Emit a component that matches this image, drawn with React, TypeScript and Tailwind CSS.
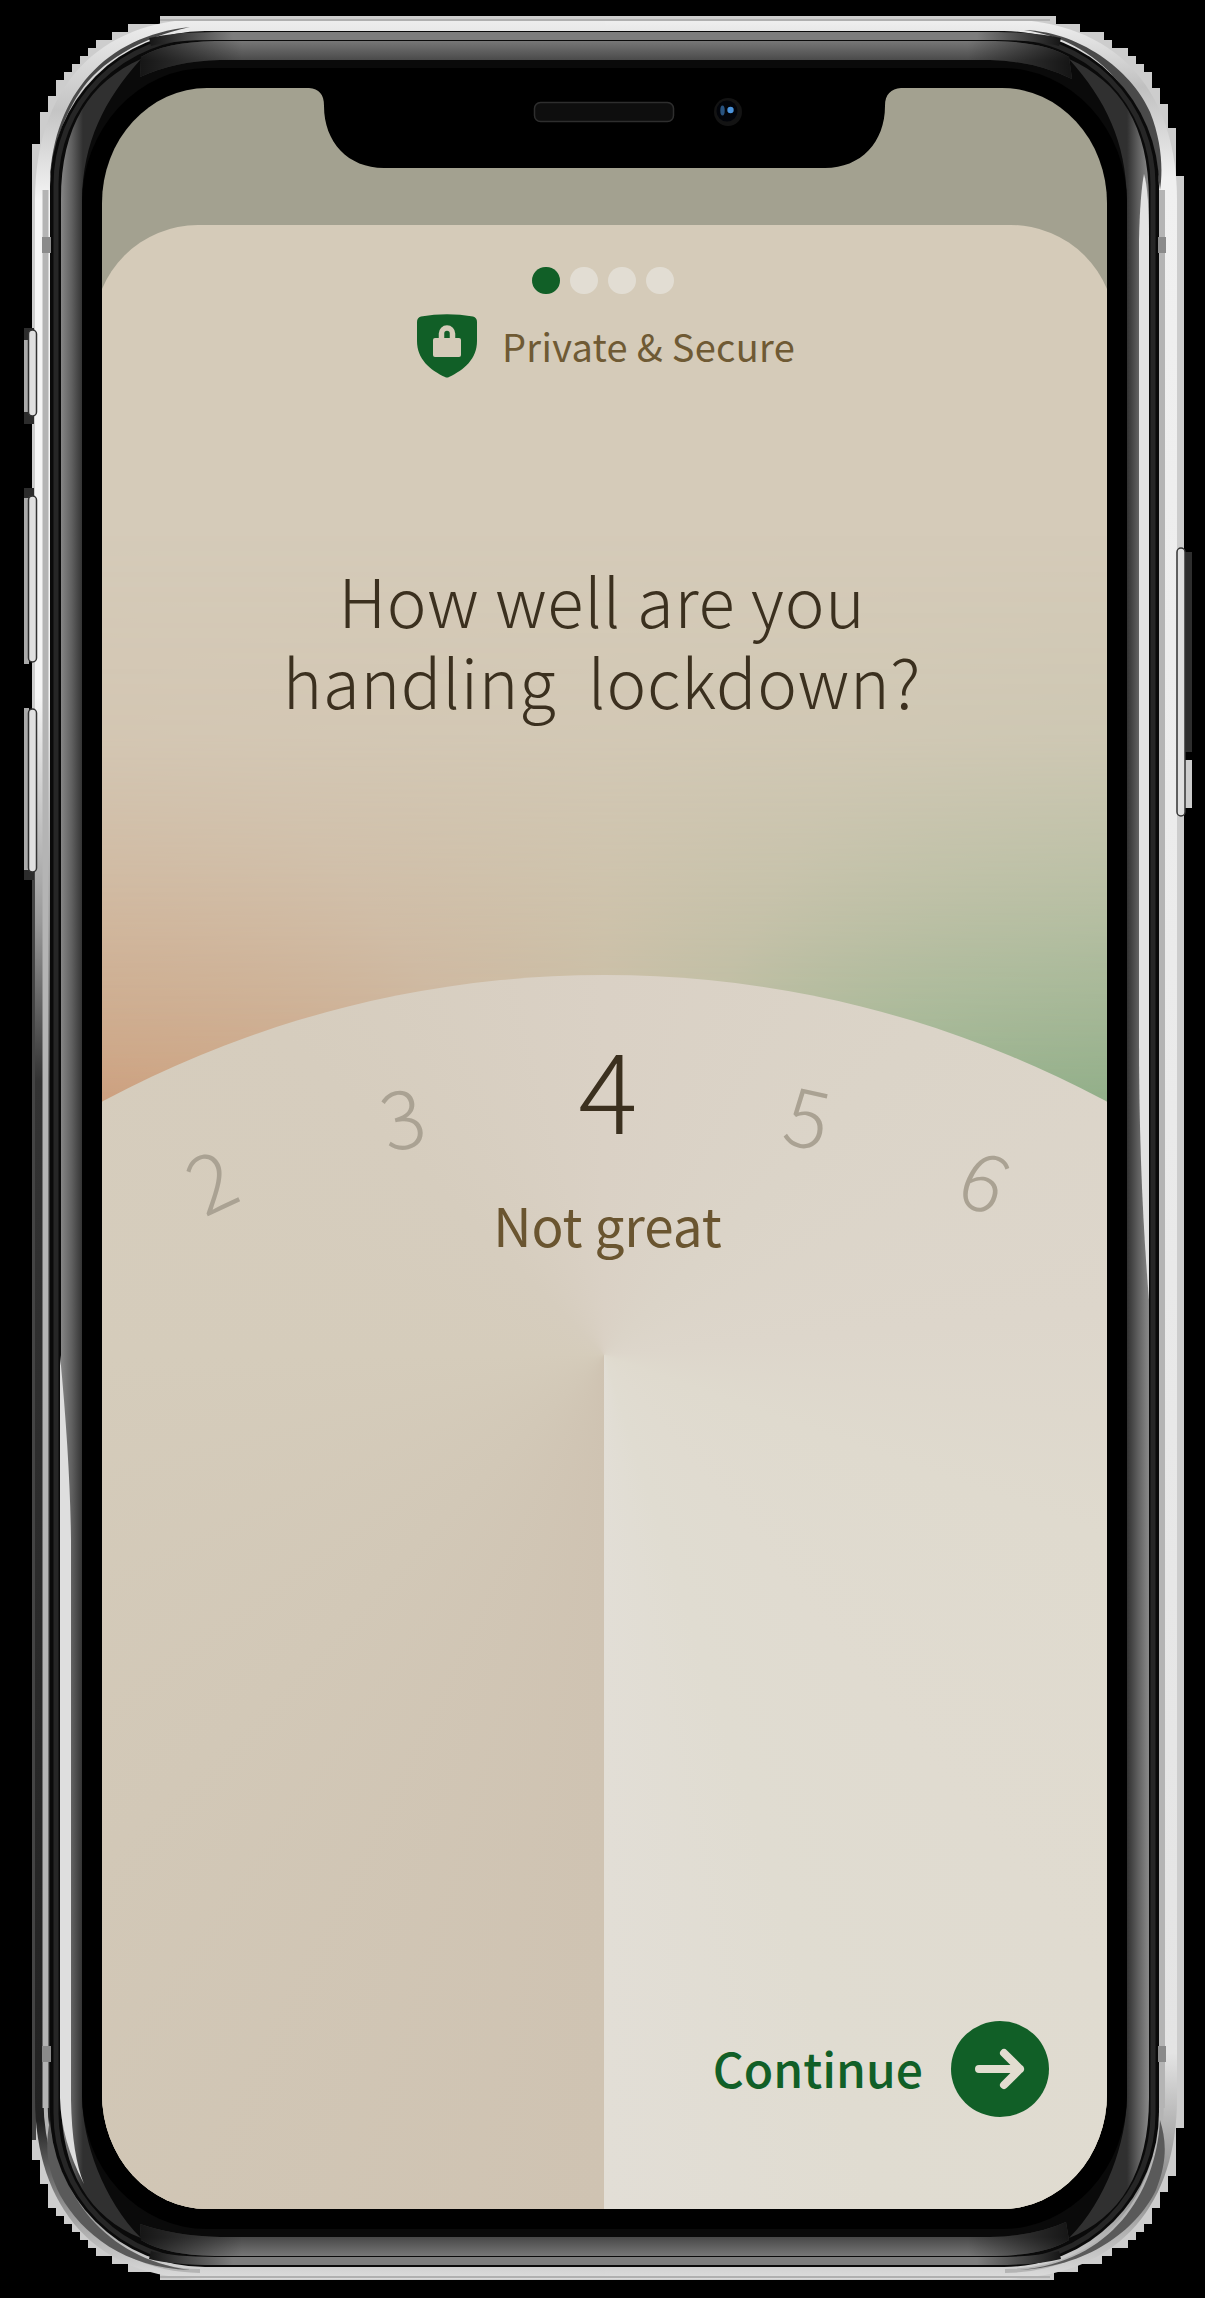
const font = "font-['Noto_Sans_CJK_SC','Noto_Sans',sans-serif]";

const DeviceFrame = () => (
  <svg className="absolute inset-0 h-full w-full" viewBox="0 0 1205 2298" fill="none" aria-hidden="true">
    <defs>
      <linearGradient id="metalL" x1="0" y1="0" x2="0" y2="1">
        <stop offset="0" stopColor="#eeeeee" />
        <stop offset="0.04" stopColor="#c4c4c4" />
        <stop offset="0.08" stopColor="#f4f4f4" />
        <stop offset="0.3" stopColor="#f4f4f4" />
        <stop offset="0.4" stopColor="#999" />
        <stop offset="0.47" stopColor="#333" />
        <stop offset="0.93" stopColor="#222" />
        <stop offset="0.97" stopColor="#999" />
        <stop offset="1" stopColor="#ddd" />
      </linearGradient>
      <linearGradient id="metalR" x1="0" y1="0" x2="0" y2="1">
        <stop offset="0" stopColor="#f0f0f0" />
        <stop offset="0.03" stopColor="#c0c0c0" />
        <stop offset="0.07" stopColor="#f0f0f0" />
        <stop offset="0.9" stopColor="#e4e4e4" />
        <stop offset="0.96" stopColor="#888" />
        <stop offset="1" stopColor="#ddd" />
      </linearGradient>
      <linearGradient id="sideL" x1="61" y1="0" x2="83" y2="0" gradientUnits="userSpaceOnUse">
        <stop offset="0" stopColor="#858585" />
        <stop offset="0.5" stopColor="#5f5f5f" />
        <stop offset="1" stopColor="#303030" />
      </linearGradient>
      <linearGradient id="sideR" x1="1127" y1="0" x2="1149" y2="0" gradientUnits="userSpaceOnUse">
        <stop offset="0" stopColor="#303030" />
        <stop offset="0.5" stopColor="#5f5f5f" />
        <stop offset="1" stopColor="#8a8a8a" />
      </linearGradient>
      <linearGradient id="topBand" x1="0" y1="41" x2="0" y2="61" gradientUnits="userSpaceOnUse">
        <stop offset="0" stopColor="#777" />
        <stop offset="1" stopColor="#484848" />
      </linearGradient>
      <linearGradient id="bottomBand" x1="0" y1="2237" x2="0" y2="2256" gradientUnits="userSpaceOnUse">
        <stop offset="0" stopColor="#484848" />
        <stop offset="1" stopColor="#777" />
      </linearGradient>
      <linearGradient id="bandEnds" x1="140" y1="0" x2="1070" y2="0" gradientUnits="userSpaceOnUse">
        <stop offset="0" stopColor="#0a0a0a" />
        <stop offset="0.1" stopColor="#7d7d7d" />
        <stop offset="0.9" stopColor="#7d7d7d" />
        <stop offset="1" stopColor="#0a0a0a" />
      </linearGradient>
      <linearGradient id="bandShade" x1="140" y1="0" x2="1070" y2="0" gradientUnits="userSpaceOnUse">
        <stop offset="0" stopColor="#000" stopOpacity="0.7" />
        <stop offset="0.11" stopColor="#000" stopOpacity="0" />
        <stop offset="0.89" stopColor="#000" stopOpacity="0" />
        <stop offset="1" stopColor="#000" stopOpacity="0.7" />
      </linearGradient>
    </defs>
    <path
      fill="#cdcdcd"
      shapeRendering="crispEdges"
      d="M160 16H1056V24H1080V32H1104V40H1112V48H1128V56H1136V64H1144V72H1152V88H1160V104H1168V128H1176V176H1184V2128H1176V2176H1168V2192H1160V2208H1152V2224H1144V2232H1136V2240H1128V2248H1112V2256H1102V2264H1078V2272H1054V2280H160V2272H128V2264H112V2256H96V2248H88V2240H80V2232H72V2224H64V2216H56V2208H48V2184H40V2160H32V144H40V112H48V96H56V80H64V72H72V64H80V56H88V48H96V40H112V32H128V24H160Z"
    />
    <path fill="#444" d="M32 872h4v1268h-4z" />
    <path fill="#2c2c2c" d="M24 328h10v12h-10zM24 412h10v12h-10zM24 488h10v10h-10zM24 870h10v10h-10z" />
    <path fill="#aaa" d="M24 340h5v72h-5zM24 498h5v166h-5zM24 708h5v162h-5z" />
    <path fill="#2e2e2e" d="M1184 552h8v200h-8z" />
    <path fill="#cdcdcd" d="M1184 760h8v48h-8z" />
    <path fill="url(#metalL)" d="M605 19H206C96 19 35 90 35 200V2098C35 2208 96 2279 206 2279H605Z" />
    <path fill="url(#metalR)" d="M605 19H1000C1116 19 1177 90 1177 200V2098C1177 2208 1116 2279 1000 2279H605Z" />
    <g fill="#e0e0e0" stroke="#333" strokeWidth="1.5">
      <rect x="28.500" y="330" width="8" height="86" rx="4" />
      <rect x="28.500" y="496" width="8" height="166" rx="4" />
      <rect x="28.500" y="709" width="8" height="163" rx="4" />
      <rect x="1177" y="548" width="8" height="268" rx="4" />
    </g>
    <path stroke="#b4b4b4" strokeWidth="6" d="M45.500 190V2108M1162 190V2108" />
    <path stroke="#b4b4b4" strokeWidth="4" d="M45.500 2100C45.500 2190 100 2270 200 2271M1162 2100C1162 2190 1110 2270 1005 2271" />
    <path stroke="#b0b0b0" strokeWidth="2" d="M160 20H1050M160 2277H1050" />
    <path fill="#4a4a4a" d="M50 180C54 95 105 36 190 27C140 38 100 62 80 92C60 122 54 150 50 180ZM1160 190C1154 115 1110 42 1024 30C1085 32 1135 76 1150 112C1162 142 1163 170 1160 190Z" />
    <path fill="#5a5a5a" d="M50 2120C58 2195 105 2258 190 2270C125 2268 82 2234 60 2195C48 2170 44 2150 50 2120ZM1160 2120C1156 2195 1110 2262 1020 2270C1095 2266 1140 2224 1156 2190C1168 2160 1166 2140 1160 2120Z" />
    <rect x="50" y="31" width="1109" height="2236" rx="155" fill="#0a0a0a" />
    <rect x="56" y="36.500" width="1097" height="2225" rx="148" stroke="#262626" strokeWidth="5" />
    <path stroke="url(#bandEnds)" strokeWidth="8" d="M150 42C170 37 190 36 215 36L995 36.100C1020 36 1040 37 1060 42M150 2255C170 2260 190 2261 215 2261L995 2261.100C1020 2261 1040 2260 1060 2255" />
    <path fill="url(#sideL)" d="M61 200C61 125 90 82 141 59C104 100 83 142 82 200V2098C83 2142 103 2200 141 2238C90 2218 61 2172 61 2098Z" />
    <path fill="#dedede" d="M60 1355Q70 1460 71 1540V2100Q72 2155 84 2184Q61 2140 60 2098Z" />
    <path fill="url(#sideR)" d="M1149 200C1149 125 1120 82 1069 59C1106 100 1126 142 1127 200V2098C1126 2142 1107 2200 1069 2238C1120 2218 1149 2172 1149 2098Z" />
    <path fill="#e2e2e2" d="M1144 174Q1149 190 1149 240V1300Q1139 1180 1139 1040V240Q1140 195 1144 174Z" />
    <path fill="url(#topBand)" d="M141 57Q165 42 215 41H995Q1045 42 1069 57L1072 79Q1035 61 990 60H220Q175 61 140 77Z" />
    <path fill="url(#bandShade)" d="M141 57Q165 42 215 41H995Q1045 42 1069 57L1072 79Q1035 61 990 60H220Q175 61 140 77Z" />
    <path fill="url(#bottomBand)" d="M141 2240Q165 2255 215 2256H995Q1045 2255 1069 2240L1066 2222Q1035 2236 990 2237H220Q175 2236 140 2224Z" />
    <path fill="url(#bandShade)" d="M141 2240Q165 2255 215 2256H995Q1045 2255 1069 2240L1066 2222Q1035 2236 990 2237H220Q175 2236 140 2224Z" />
    <path fill="#8a8a8a" d="M42 237h9v16h-9zM1158 237h8v16h-8zM42 2046h9v16h-9zM1158 2046h8v16h-8z" />
  </svg>
);

const Notch = () => (
  <svg className="absolute left-[207px] top-0 h-[82px] w-[592px]" viewBox="0 0 592 82" aria-hidden="true">
    <path fill="#000" d="M0 0H592C582 1 576 6 576 18C576 54 552 80 516 80H75C39 80 15 54 15 18C15 6 10 1 0 0Z" />
    <rect x="225.500" y="14.500" width="139" height="19" rx="6" fill="#0e0e0e" stroke="#2e2e2e" strokeWidth="1.500" />
    <circle cx="419" cy="24" r="14" fill="#131313" />
    <circle cx="418" cy="23" r="10.500" fill="#02040a" />
    <ellipse cx="413.500" cy="22.500" rx="2.200" ry="5" fill="#28527f" />
    <circle cx="421.500" cy="22" r="3.200" fill="#4c94dc" />
  </svg>
);

const ShieldLock = () => (
  <svg className="h-[64px] w-[60px]" viewBox="0 0 60 64" aria-hidden="true">
    <path fill="#115f27" d="M4 2.500Q30 -2 56 2.500Q60 3.500 60 8V27C60 45 47 56 32 63Q30 64 28 63C13 56 0 45 0 27V8Q0 3.500 4 2.500Z" />
    <rect x="16" y="24" width="28" height="19" rx="2" fill="#d5cbb9" />
    <path d="M24.500 26V19.500A5.500 5.500 0 0 1 35.500 19.500V26" fill="none" stroke="#d5cbb9" strokeWidth="5.500" />
  </svg>
);

const digits = [
  { n: 2, cls: "left-[67px] top-[1031px] -rotate-[25deg]" },
  { n: 3, cls: "left-[259px] top-[968px] -rotate-[12.5deg]" },
  { n: 5, cls: "left-[667px] top-[967px] rotate-[12.5deg]" },
  { n: 6, cls: "left-[845px] top-[1031px] rotate-[25deg]" },
];

const Dial = () => (
  <>
    <div className="absolute left-[-557px] top-[887px] h-[2119px] w-[2119px] rounded-full bg-[conic-gradient(from_180deg_at_1059px_380px,#cfc3b2_0deg,#d2c8b7_45deg,#d5ccbb_90deg,#d6cdbe_135deg,#dad1c5_180deg,#dbd4c8_225deg,#ddd6cb_265deg,#dfdace_290deg,#e0dbd0_322deg,#e0dcd1_342deg,#e2ded6_360deg)]" />
    {digits.map((d) => (
      <span key={d.n} className={`absolute flex h-[114px] w-[80px] items-center justify-center text-[81px] font-light leading-none text-[#aaa293] ${d.cls}`}>
        {d.n}
      </span>
    ))}
  </>
);

export default function App() {
  return (
    <div className={`relative h-[2298px] w-[1205px] overflow-hidden bg-black ${font}`}>
      <DeviceFrame />
      <div className="relative flex h-full pb-[89px] pl-[102px] pr-[98px] pt-[88px]">
        <main className="relative w-full overflow-hidden rounded-[105px/115px] bg-[#a3a190] shadow-[0_0_0_20px_#000]">
          <Notch />
          <section className="relative -mx-2 mt-[137px] h-[1984px] overflow-hidden rounded-t-[104px] bg-[#d5cbb9] px-2">
            <div className="absolute inset-x-2 -top-[137px] h-[2121px]">
              <div className="absolute inset-x-0 top-[440px] h-[600px] bg-[conic-gradient(from_270deg_at_50%_680px,#cb8f6c_0deg,#cca17f_18deg,#ccb298_52deg,#c7bba0_90deg,#b9ba9d_118deg,#9bb48f_150deg,#7fa67c_180deg)] [mask-image:linear-gradient(to_bottom,transparent_0%,rgba(0,0,0,.16)_35%,rgba(0,0,0,.65)_72%,rgba(0,0,0,.95)_100%)]" />
              <Dial />
            </div>
            <div className="relative flex h-full flex-col items-center">
              <div className="mr-[3px] mt-[42px] flex gap-[10px]">
                <i className="h-[27px] w-[28px] rounded-full bg-[#115f27]" />
                <i className="h-[27px] w-[28px] rounded-full bg-[#e2ddd3]" />
                <i className="h-[27px] w-[28px] rounded-full bg-[#e2ddd3]" />
                <i className="h-[27px] w-[28px] rounded-full bg-[#e2ddd3]" />
              </div>
              <div className="ml-[3px] mt-[20px] flex h-[64px] items-center gap-[25px]">
                <ShieldLock />
                <span className="whitespace-nowrap text-[38px] leading-[64px] tracking-[0.3px] text-[#6f5a34]">Private &amp; Secure</span>
              </div>
              <h1 className="mr-[5px] mt-[180px] whitespace-pre text-center text-[67px] font-light leading-[81px] tracking-[0.8px] text-[#3b301f]">
                {"How well are you\nhandling  lockdown?"}
              </h1>
              <p className="ml-[7px] mt-[306px] text-[111px] font-light leading-[120px] text-[#3b301f]">4</p>
              <p className="ml-[6px] mt-[43px] text-[53px] leading-[70px] text-[#6a5530]">Not great</p>
              <button className="absolute bottom-[92px] right-[58px] flex h-[96px] items-center gap-[28px] text-[48px] font-medium text-[#115f27]">
                <span className="-mt-[4px]">Continue</span>
                <svg className="h-[96px] w-[98px]" viewBox="0 0 98 96" aria-hidden="true">
                  <ellipse cx="49" cy="48" rx="49" ry="48" fill="#115f27" />
                  <path d="M28 48H69M53 32L69 48L53 64" fill="none" stroke="#e2ddd0" strokeWidth="8" strokeLinecap="round" strokeLinejoin="round" />
                </svg>
              </button>
            </div>
          </section>
        </main>
      </div>
    </div>
  );
}
